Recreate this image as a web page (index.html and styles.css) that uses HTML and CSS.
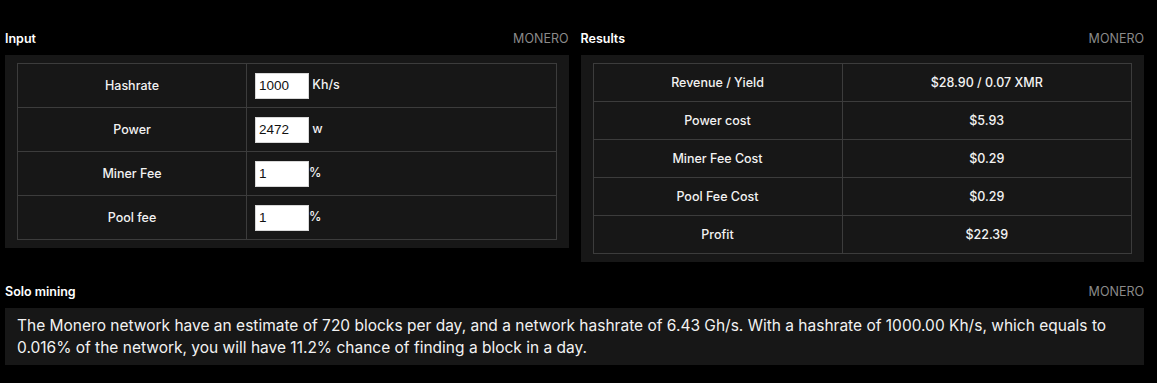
FILE: index.html
```html
<!DOCTYPE html>
<html lang="en">
<head>
    <meta charset="UTF-8">
    <title>Monero mining calculator</title>
    <link rel="stylesheet" href="styles.css">
</head>
<body>
    <div class="grid">
        <section class="card">
            <div class="card-head">
                <span class="card-title">Input</span>
                <span class="card-coin">MONERO</span>
            </div>
            <div class="card-body">
                <table class="calc input-table">
                    <tr>
                        <td class="label">Hashrate</td>
                        <td class="value"><input type="text" value="1000"> Kh/s</td>
                    </tr>
                    <tr>
                        <td class="label">Power</td>
                        <td class="value"><input type="text" value="2472"> w</td>
                    </tr>
                    <tr>
                        <td class="label">Miner Fee</td>
                        <td class="value"><input type="text" value="1">%</td>
                    </tr>
                    <tr>
                        <td class="label">Pool fee</td>
                        <td class="value"><input type="text" value="1">%</td>
                    </tr>
                </table>
            </div>
        </section>

        <section class="card">
            <div class="card-head">
                <span class="card-title">Results</span>
                <span class="card-coin">MONERO</span>
            </div>
            <div class="card-body">
                <table class="calc result-table">
                    <tr>
                        <td class="label">Revenue / Yield</td>
                        <td>$28.90 / 0.07 XMR</td>
                    </tr>
                    <tr>
                        <td class="label">Power cost</td>
                        <td>$5.93</td>
                    </tr>
                    <tr>
                        <td class="label">Miner Fee Cost</td>
                        <td>$0.29</td>
                    </tr>
                    <tr>
                        <td class="label">Pool Fee Cost</td>
                        <td>$0.29</td>
                    </tr>
                    <tr>
                        <td class="label">Profit</td>
                        <td>$22.39</td>
                    </tr>
                </table>
            </div>
        </section>

        <section class="card wide">
            <div class="card-head">
                <span class="card-title">Solo mining</span>
                <span class="card-coin">MONERO</span>
            </div>
            <div class="card-body solo">
                The Monero network have an estimate of 720 blocks per day, and a network hashrate of 6.43 Gh/s. With a hashrate of 1000.00 Kh/s, which equals to 0.016% of the network, you will have 11.2% chance of finding a block in a day.
            </div>
        </section>
    </div>
</body>
</html>
```

FILE: styles.css
```css
:root {
    --bg: #000000;
    --panel: #171717;
    --line: #3c3c3c;
    --text: #f2f2f2;
    --muted: #8a8a8a;
}

body {
    margin: 0;
    padding: 21px 13px 0 5px;
    background: var(--bg);
    color: var(--text);
    font-family: Inter, 'Noto Sans', sans-serif;
    font-size: 12.5px;
}

.grid {
    display: grid;
    grid-template-columns: 1fr 1fr;
    column-gap: 12px;
    row-gap: 12px;
    align-items: start;
}

.wide {
    grid-column: 1 / -1;
}

.card-head {
    height: 34px;
    display: flex;
    align-items: center;
    justify-content: space-between;
}

.card-title {
    font-weight: 600;
    color: #ffffff;
}

.card-coin {
    color: var(--muted);
}

.card-body {
    background: var(--panel);
    padding: 8px 12px;
}

.calc {
    width: 100%;
    border-collapse: collapse;
}

.calc td {
    border: 1px solid var(--line);
    padding: 0;
    font-weight: 500;
}

.input-table td {
    height: 43px;
}

.input-table .label {
    width: 228px;
    text-align: center;
}

.input-table .value {
    padding-left: 8px;
}

.input-table input {
    width: 54px;
    height: 26px;
    box-sizing: border-box;
    margin: 0;
    padding: 0 3px;
    border: 1px solid #d8d8d8;
    background: #ffffff;
    color: #111111;
    font-family: 'Liberation Sans', Arial, sans-serif;
    font-size: 13.5px;
    vertical-align: middle;
}

.result-table td {
    height: 37px;
    text-align: center;
}

.result-table .label {
    width: 248px;
}

.solo {
    padding: 7px 12px 6px;
    font-size: 15.5px;
    line-height: 22px;
    font-weight: 400;
}
```
